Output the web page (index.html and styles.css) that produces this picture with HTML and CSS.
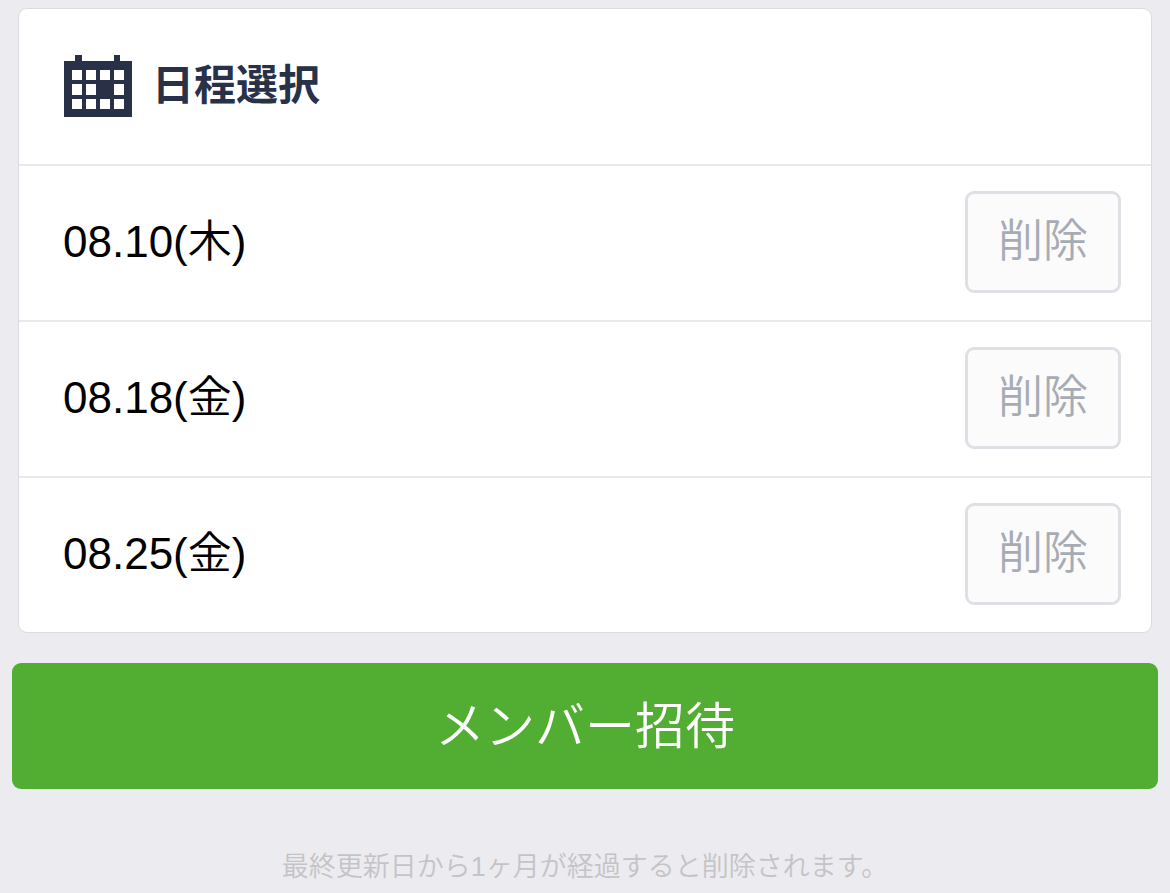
FILE: index.html
```html
<!DOCTYPE html>
<html lang="ja">
<head>
  <meta charset="utf-8">
  <meta name="viewport" content="width=device-width, initial-scale=1">
  <title>日程選択</title>
  <link rel="stylesheet" href="styles.css">
</head>
<body>
  <main class="page">
    <section class="card" aria-labelledby="schedule-title">
      <header class="card-header">
        <svg class="calendar-icon" viewBox="0 0 68 62" aria-hidden="true">
          <path fill="#283147" d="M0 6H11V0H18V6H50V0H56V6H68V62H0Z"/>
          <path fill="#fff" d="M8 15h10v10H8zM22 15h10v10H22zM36 15h10v10H36zM50 15h10v10H50zM8 29h10v11H8zM22 29h10v11H22zM50 29h10v11H50zM8 44h10v10H8zM22 44h10v10H22zM36 44h10v10H36zM50 44h10v10H50z"/>
        </svg>
        <h1 class="card-title" id="schedule-title">日程選択</h1>
      </header>
      <ul class="date-list">
        <li class="date-row">
          <span class="date">08.10(木)</span>
          <button class="delete-button" type="button">削除</button>
        </li>
        <li class="date-row">
          <span class="date">08.18(金)</span>
          <button class="delete-button" type="button">削除</button>
        </li>
        <li class="date-row">
          <span class="date">08.25(金)</span>
          <button class="delete-button" type="button">削除</button>
        </li>
      </ul>
    </section>
    <button class="invite-button" type="button">メンバー招待</button>
    <p class="note">最終更新日から1ヶ月が経過すると削除されます。</p>
  </main>
</body>
</html>
```

FILE: styles.css
```css
* {
  box-sizing: border-box;
}

body {
  margin: 0;
  background: #ecebf0;
  color: #000;
  font-family: "Liberation Sans", "Noto Sans CJK JP", sans-serif;
}

button {
  font-family: inherit;
  cursor: pointer;
}

.page {
  display: flex;
  flex-direction: column;
  padding: 8px 12px 0;
}

.card {
  margin: 0 6px;
  border: 1px solid #dcdce0;
  border-radius: 9px;
  background: #fff;
}

.card-header {
  display: flex;
  align-items: center;
  gap: 20px;
  height: 155px;
  padding: 0 45px 2px;
}

.calendar-icon {
  width: 68px;
  height: 62px;
}

.card-title {
  margin: 0;
  color: #283147;
  font-size: 42px;
  font-weight: 700;
  line-height: 60px;
}

.date-list {
  margin: 0;
  padding: 0;
  list-style: none;
}

.date-row {
  display: flex;
  align-items: center;
  justify-content: space-between;
  height: 156px;
  padding: 0 30px 2px 44px;
  border-top: 2px solid #e9e9eb;
}

.date {
  font-size: 44px;
  font-weight: 350;
  line-height: 60px;
}

.delete-button {
  width: 156px;
  height: 102px;
  padding: 0;
  border: 3px solid #dfe0e5;
  border-radius: 9px;
  background: #fbfbfb;
  color: #a7acb4;
  font-size: 45px;
  font-weight: 350;
  line-height: 60px;
}

.invite-button {
  height: 126px;
  margin-top: 30px;
  padding: 2px 0 0;
  border: 0;
  border-radius: 9px;
  background: #52ae32;
  color: #fff;
  font-size: 50px;
  font-weight: 350;
  line-height: 60px;
}

.note {
  margin: 58px 0 0;
  color: #c4c4c6;
  font-size: 27px;
  font-weight: 350;
  line-height: 40px;
  text-align: center;
}
```
